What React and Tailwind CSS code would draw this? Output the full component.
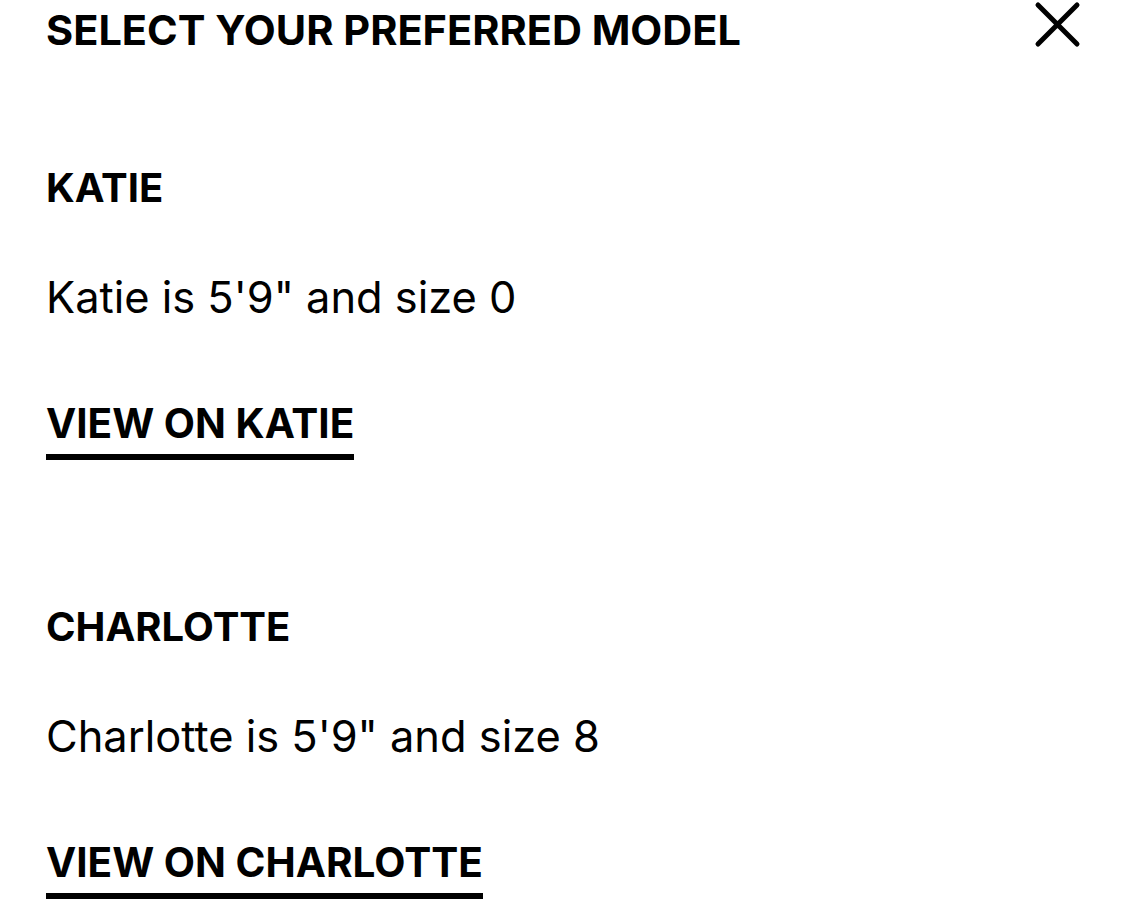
import React from 'react'

const models = [
  { name: 'KATIE', label: 'Katie', size: '0' },
  { name: 'CHARLOTTE', label: 'Charlotte', size: '8' },
]

function CloseIcon() {
  return (
    <svg width="48" height="48" viewBox="0 0 48 48" fill="none" stroke="black" strokeWidth="5" strokeLinecap="round">
      <path d="M5 4 L44 43 M44 4 L5 43" />
    </svg>
  )
}

export default function App() {
  return (
    <div className="bg-white text-black w-[1125px] h-[900px] overflow-hidden font-['Inter',sans-serif]">
      <div className="flex items-start justify-between pl-[46px] pr-[44px]">
        <h1 className="text-[41.5px] font-bold leading-[60px] uppercase">Select your preferred model</h1>
        <button className="mt-[1px]" aria-label="Close">
          <CloseIcon />
        </button>
      </div>

      <div className="pl-[46px] mt-[98px] flex flex-col gap-[137px]">
        {models.map((m) => (
          <div key={m.name} className="flex flex-col">
            <h2 className="text-[40px] font-bold leading-[60px]">{m.name}</h2>
            <p className="text-[43.4px] leading-[60px] mt-[49px]">
              {m.label} is 5'9" and size {m.size}
            </p>
            <div className="mt-[67px]">
              <a className="inline-block text-[40.5px] font-bold leading-[60px] border-b-[6px] border-black">
                VIEW ON {m.name}
              </a>
            </div>
          </div>
        ))}
      </div>
    </div>
  )
}
